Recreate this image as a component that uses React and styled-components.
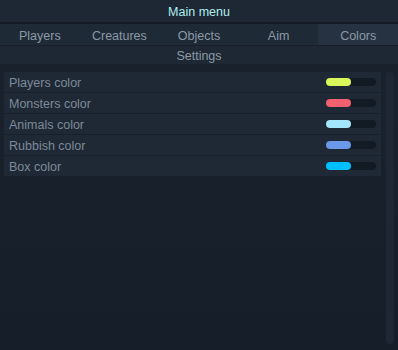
import React from "react";
import styled, { createGlobalStyle } from "styled-components";

const Global = createGlobalStyle`
  html, body { margin: 0; padding: 0; background: #17202a; }
  body { font-family: "Liberation Sans", Arial, sans-serif; }
`;

const Screen = styled.div`
  width: 398px;
  height: 350px;
  display: flex;
  flex-direction: column;
  background: linear-gradient(180deg, #19222d 0%, #161f29 100%);
  font-size: 12.5px;
  overflow: hidden;
`;

const TitleBar = styled.div`
  height: 22px;
  display: flex;
  align-items: center;
  justify-content: center;
  padding-top: 1px;
  box-sizing: border-box;
  background: #1e2834;
  color: #aeeff0;
  border-bottom: 2px solid #141b24;
  height: 24px;
`;

const TabBar = styled.div`
  height: 21px;
  display: grid;
  grid-template-columns: repeat(5, 1fr);
  background: #1f2a37;
  border-bottom: 1px solid #161e27;
`;

const Tab = styled.div`
  display: flex;
  align-items: center;
  justify-content: center;
  padding-top: 2px;
  box-sizing: border-box;
  color: #8c99a6;
  background: ${(p) => (p.$active ? "#263241" : "transparent")};
`;

const SubHeader = styled.div`
  height: 18px;
  display: flex;
  align-items: center;
  justify-content: center;
  padding-top: 2px;
  box-sizing: border-box;
  background: #1e2834;
  color: #8c99a6;
`;

const Body = styled.div`
  flex: 1;
  display: flex;
  align-items: flex-start;
  gap: 5px;
  padding: 8px 0 0 4px;
`;

const Panel = styled.div`
  width: 377px;
  display: flex;
  flex-direction: column;
  gap: 1px;
  background: #18212a;
`;

const Row = styled.div`
  height: 20px;
  display: flex;
  align-items: center;
  justify-content: space-between;
  padding: 1px 5px 0;
  box-sizing: border-box;
  background: #1f2936;
  color: #7d8a97;
`;

const Track = styled.div`
  width: 50px;
  height: 8px;
  margin-top: -1px;
  border-radius: 4px;
  background: #121a23;
  display: flex;
`;

const Fill = styled.div`
  width: 25px;
  height: 8px;
  border-radius: 4px;
  background: ${(p) => p.$color};
`;

const Scrollbar = styled.div`
  width: 8px;
  height: 272px;
  border-radius: 4px;
  background: #1e2834;
`;

const tabs = ["Players", "Creatures", "Objects", "Aim", "Colors"];
const rows = [
  ["Players color", "#d9f65b"],
  ["Monsters color", "#f1606f"],
  ["Animals color", "#a2e5fc"],
  ["Rubbish color", "#6b98e8"],
  ["Box color", "#00bffe"],
];

export default function App() {
  return (
    <>
      <Global />
      <Screen>
        <TitleBar>Main menu</TitleBar>
        <TabBar>
          {tabs.map((t) => (
            <Tab key={t} $active={t === "Colors"}>
              {t}
            </Tab>
          ))}
        </TabBar>
        <SubHeader>Settings</SubHeader>
        <Body>
          <Panel>
            {rows.map(([label, color]) => (
              <Row key={label}>
                <span>{label}</span>
                <Track>
                  <Fill $color={color} />
                </Track>
              </Row>
            ))}
          </Panel>
          <Scrollbar />
        </Body>
      </Screen>
    </>
  );
}
